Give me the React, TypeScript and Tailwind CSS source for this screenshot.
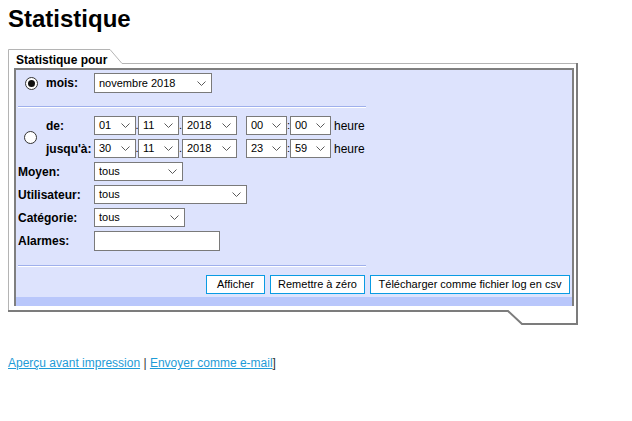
import React from "react";

const font = { fontFamily: '"Liberation Sans", Arial, sans-serif' };

function Chevron() {
  return (
    <svg width="9" height="5" viewBox="0 0 9 5" className="shrink-0">
      <path d="M0.5 0.5 L4.5 4.5 L8.5 0.5" fill="none" stroke="#5a5a5a" strokeWidth="1" />
    </svg>
  );
}

function Select({ value, w, h = 19 }: { value: string; w: number; h?: number }) {
  return (
    <div
      className="flex items-center justify-between bg-white border border-[#7a7a7a] pl-[4px] pr-[5px] text-[11px] text-black shrink-0"
      style={{ width: w, height: h }}
    >
      <span>{value}</span>
      <Chevron />
    </div>
  );
}

function Radio({ checked }: { checked?: boolean }) {
  return (
    <div className="w-[13px] h-[13px] rounded-full border border-[#333] bg-white flex items-center justify-center shrink-0">
      {checked && <div className="w-[7px] h-[7px] rounded-full bg-[#111]" />}
    </div>
  );
}

function Separator() {
  return (
    <div className="ml-[2px] w-[348px] h-[2px] border-t border-[#9fb0ec] border-b border-b-white" />
  );
}

function DateRow({ label, d, m, y, hh, mm }: { label: string; d: string; m: string; y: string; hh: string; mm: string }) {
  return (
    <div className="flex items-center h-[19px]">
      <span className="w-[48px] text-[12px] font-bold">{label}</span>
      <Select value={d} w={42} />
      <span className="w-[2px] text-[11px] flex justify-center">.</span>
      <Select value={m} w={41} />
      <span className="w-[3px] text-[11px] flex justify-center">.</span>
      <Select value={y} w={55} />
      <span className="w-[9px]" />
      <Select value={hh} w={41} />
      <span className="w-[3px] text-[11px] flex justify-center">:</span>
      <Select value={mm} w={41} />
      <span className="ml-[3px] text-[12px]">heure</span>
    </div>
  );
}

function FieldRow({ label, children }: { label: string; children: React.ReactNode }) {
  return (
    <div className="flex items-center h-[19px] pl-[2px]">
      <span className="w-[76px] text-[12px] font-bold">{label}</span>
      {children}
    </div>
  );
}

function Button({ label, w }: { label: string; w: number }) {
  return (
    <div
      className="h-[19px] flex items-center justify-center whitespace-nowrap bg-white border border-[#0a9be3] text-[11px] text-black"
      style={{ width: w }}
    >
      {label}
    </div>
  );
}

export default function App() {
  return (
    <div className="bg-white min-h-[421px] text-black" style={font}>
      <h1 className="pt-[5px] pl-[8px] text-[24px] leading-[28px] font-bold">Statistique</h1>

      {/* Framed panel */}
      <div className="relative ml-[8px] mt-[16px] w-[571px] h-[276px]">
        <svg className="absolute inset-0" width="571" height="276" viewBox="0 0 571 276">
          <path d="M0.5 262 L0.5 0.5 L102 0.5 L114 14.5 L569 14.5" fill="none" stroke="#b4b4b4" strokeWidth="1" />
          <path d="M569 14 L569 275 L514 275 L500 262 L0 262" fill="none" stroke="#7c7c7c" strokeWidth="2" />
        </svg>

        <div className="relative pt-[4px] pl-[8px] text-[12px] leading-[14px] font-bold">Statistique pour</div>

        <div className="relative ml-[6px] mt-[1px] w-[560px] h-[238px] bg-[#dde3fd] border-t-2 border-l-2 border-r-2 border-[#7f7f7f] flex flex-col">
          {/* mois */}
          <div className="flex items-center h-[20px] mt-[3px]">
            <div className="w-[30px] flex justify-end pr-[8px]">
              <Radio checked />
            </div>
            <span className="w-[48px] text-[12px] font-bold">mois:</span>
            <Select value="novembre 2018" w={118} h={20} />
          </div>

          <div className="mt-[13px]">
            <Separator />
          </div>

          {/* de / jusqu'à */}
          <div className="flex items-center mt-[8px]">
            <div className="w-[30px] flex justify-end pr-[9px]">
              <Radio />
            </div>
            <div className="flex flex-col gap-[4px]">
              <DateRow label="de:" d="01" m="11" y="2018" hh="00" mm="00" />
              <DateRow label="jusqu'à:" d="30" m="11" y="2018" hh="23" mm="59" />
            </div>
          </div>

          <div className="flex flex-col gap-[4px] mt-[4px]">
            <FieldRow label="Moyen:">
              <Select value="tous" w={89} />
            </FieldRow>
            <FieldRow label="Utilisateur:">
              <Select value="tous" w={153} />
            </FieldRow>
            <FieldRow label="Catégorie:">
              <Select value="tous" w={91} />
            </FieldRow>
            <div className="flex items-center h-[20px] pl-[2px]">
              <span className="w-[76px] text-[12px] font-bold">Alarmes:</span>
              <div className="w-[126px] h-[20px] bg-white border border-[#7a7a7a]" />
            </div>
          </div>

          <div className="mt-[14px]">
            <Separator />
          </div>

          <div className="flex justify-end gap-[5px] pr-[2px] mt-[8px]">
            <Button label="Afficher" w={59} />
            <Button label="Remettre à zéro" w={95} />
            <Button label="Télécharger comme fichier log en csv" w={200} />
          </div>

          <div className="mt-[3px] h-[9px] bg-[#b9c7fb]" />
        </div>
      </div>

      <p className="mt-[31px] pl-[8px] text-[12px] leading-[14px]">
        <a className="text-[#1e9bd7] underline">Aperçu avant impression</a>
        <span className="text-[#333]"> | </span>
        <a className="text-[#1e9bd7] underline">Envoyer comme e-mail</a>
        <span className="text-[#333]">]</span>
      </p>
    </div>
  );
}
